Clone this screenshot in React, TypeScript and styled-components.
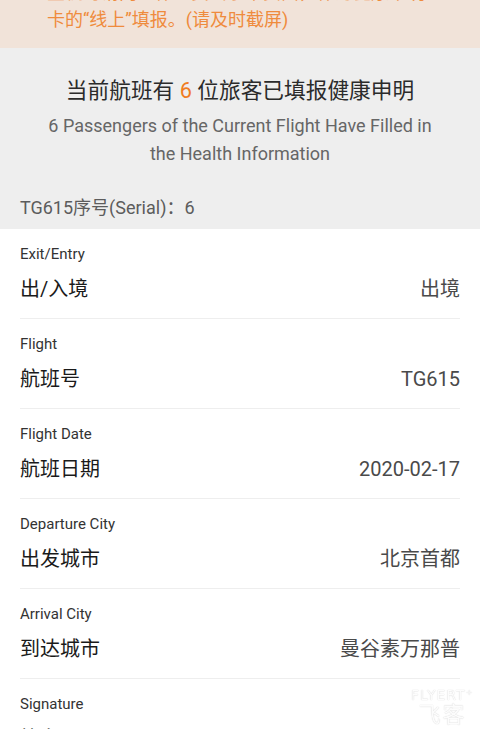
import styled, { createGlobalStyle } from 'styled-components'

const GlobalStyle = createGlobalStyle`
  html, body {
    margin: 0;
    padding: 0;
    background: #ffffff;
    overflow: hidden;
  }
  body {
    font-family: Roboto, "Noto Sans CJK SC", sans-serif;
    -webkit-font-smoothing: antialiased;
  }
`

const Page = styled.div`
  width: 480px;
  min-height: 729px;
  background: #ffffff;
`

const Notice = styled.div`
  margin-top: -21px;
  padding: 0 20px 15px 28px;
  background: #f1e3d9;
  color: #ef8b3d;
  font-size: 18px;
  line-height: 27px;
  display: flex;
`

const NoticeMarker = styled.span`
  flex: 0 0 19px;
`

const NoticeText = styled.span`
  flex: 1;
  white-space: nowrap;
`

const Summary = styled.section`
  background: #eeeeee;
  padding: 28px 20px 9px;
`

const Title = styled.h1`
  margin: 0;
  text-align: center;
  font-size: 21.7px;
  line-height: 30px;
  font-weight: 400;
  color: #2b2b2b;
`

const Count = styled.span`
  color: #f07c22;
`

const Subtitle = styled.p`
  margin: 6px 0 0;
  text-align: center;
  font-size: 18px;
  line-height: 28px;
  color: #666666;
`

const Serial = styled.div`
  margin-top: 28px;
  font-size: 18px;
  line-height: 24px;
  color: #5c5c5c;
`

const List = styled.div`
  padding: 0 20px;
  background: #ffffff;
`

const Row = styled.div`
  padding: 15px 0;
  border-bottom: 1px solid #eeeeee;
`

const Label = styled.div`
  font-size: 15px;
  line-height: 20px;
  color: #333333;
`

const ValueLine = styled.div`
  margin-top: 11px;
  display: flex;
  justify-content: space-between;
  align-items: center;
  font-size: 20px;
  line-height: 28px;
`

const Name = styled.span`
  color: #1a1a1a;
`

const Value = styled.span`
  color: #4a4a4a;
`

const Watermark = styled.div`
  position: fixed;
  right: 6px;
  bottom: 2px;
  display: flex;
  flex-direction: column;
  align-items: center;
  color: rgba(255, 255, 255, 0.95);
  text-shadow: 0 0 1px rgba(0, 0, 0, 0.25);
  pointer-events: none;
`

const WatermarkBrand = styled.span`
  font-family: "DejaVu Sans", sans-serif;
  font-size: 14px;
  letter-spacing: 1px;
  line-height: 16px;
`

const WatermarkName = styled.span`
  font-size: 22px;
  line-height: 24px;
  letter-spacing: 2px;
`

const rows = [
  { label: 'Exit/Entry', name: '出/入境', value: '出境' },
  { label: 'Flight', name: '航班号', value: 'TG615' },
  { label: 'Flight Date', name: '航班日期', value: '2020-02-17' },
  { label: 'Departure City', name: '出发城市', value: '北京首都' },
  { label: 'Arrival City', name: '到达城市', value: '曼谷素万那普' },
  { label: 'Signature', name: '签名', value: '' },
]

export default function App() {
  return (
    <Page>
      <GlobalStyle />
      <Notice>
        <NoticeMarker>2.</NoticeMarker>
        <NoticeText>
          登机时请向工作人员出示本页面，作为健康申明
          <br />
          卡的“线上”填报。(请及时截屏)
        </NoticeText>
      </Notice>
      <Summary>
        <Title>
          当前航班有 <Count>6</Count> 位旅客已填报健康申明
        </Title>
        <Subtitle>
          6 Passengers of the Current Flight Have Filled in
          <br />
          the Health Information
        </Subtitle>
        <Serial>TG615序号(Serial)：6</Serial>
      </Summary>
      <List>
        {rows.map((row) => (
          <Row key={row.label}>
            <Label>{row.label}</Label>
            <ValueLine>
              <Name>{row.name}</Name>
              <Value>{row.value}</Value>
            </ValueLine>
          </Row>
        ))}
      </List>
      <Watermark>
        <WatermarkBrand>FLYERT⁺</WatermarkBrand>
        <WatermarkName>飞客</WatermarkName>
      </Watermark>
    </Page>
  )
}
